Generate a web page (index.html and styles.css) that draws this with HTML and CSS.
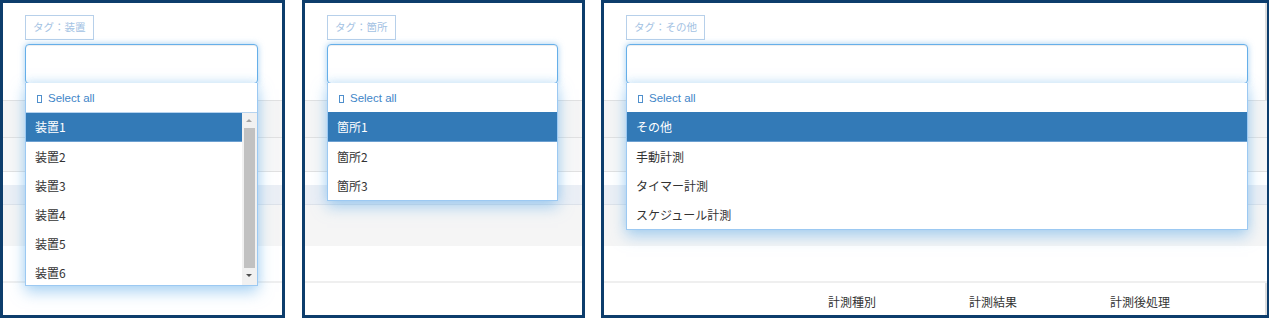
FILE: index.html
```html
<!DOCTYPE html>
<html lang="ja">
<head>
  <meta charset="UTF-8" />
  <title>タグ選択</title>
  <meta name="viewport" content="width=device-width, initial-scale=1.0"/>
  <link rel="stylesheet" href="styles.css">
</head>
<body>

  <div class="board">

    <!-- 装置 -->
    <section class="panel">
      <div class="filter">
        <span class="tag">タグ：装置</span>
        <div class="combo">
          <div class="combo-input"></div>
          <div class="menu">
            <div class="select-all"><span class="box"></span>Select all</div>
            <div class="menu-body">
              <ul class="options">
                <li class="active">装置1</li>
                <li>装置2</li>
                <li>装置3</li>
                <li>装置4</li>
                <li>装置5</li>
                <li>装置6</li>
              </ul>
              <div class="scrollbar">
                <span class="arrow up"></span>
                <span class="thumb"></span>
                <span class="arrow down"></span>
              </div>
            </div>
          </div>
        </div>
      </div>
      <div class="rows">
        <div class="row r1"></div>
        <div class="row r2"></div>
        <div class="row r3"></div>
        <div class="row r4"></div>
        <div class="row r5"></div>
        <div class="row r6"></div>
        <div class="row head"></div>
      </div>
    </section>

    <!-- 箇所 -->
    <section class="panel">
      <div class="filter">
        <span class="tag">タグ：箇所</span>
        <div class="combo">
          <div class="combo-input"></div>
          <div class="menu">
            <div class="select-all"><span class="box"></span>Select all</div>
            <ul class="options">
              <li class="active">箇所1</li>
              <li>箇所2</li>
              <li>箇所3</li>
            </ul>
          </div>
        </div>
      </div>
      <div class="rows">
        <div class="row r1"></div>
        <div class="row r2"></div>
        <div class="row r3"></div>
        <div class="row r4"></div>
        <div class="row r5"></div>
        <div class="row r6"></div>
        <div class="row head"></div>
      </div>
    </section>

    <!-- その他 -->
    <section class="panel panel-wide">
      <div class="filter">
        <span class="tag">タグ：その他</span>
        <div class="combo">
          <div class="combo-input"></div>
          <div class="menu">
            <div class="select-all"><span class="box"></span>Select all</div>
            <ul class="options">
              <li class="active">その他</li>
              <li>手動計測</li>
              <li>タイマー計測</li>
              <li>スケジュール計測</li>
            </ul>
          </div>
        </div>
      </div>
      <div class="rows">
        <div class="row r1"></div>
        <div class="row r2"></div>
        <div class="row r3"></div>
        <div class="row r4"></div>
        <div class="row r5"></div>
        <div class="row r6"></div>
        <div class="row head">
          <span>計測種別</span>
          <span>計測結果</span>
          <span>計測後処理</span>
        </div>
      </div>
    </section>

  </div>

</body>
</html>
```

FILE: styles.css
```css
* {
  box-sizing: border-box;
}

body {
  margin: 0;
  background-color: #ffffff;
  font-family: "Liberation Sans", "Noto Sans CJK JP", sans-serif;
  color: #333;
}

.board {
  display: grid;
  grid-template-columns: 285px 283px 668px;
  column-gap: 17px;
  height: 318px;
}

.board .panel:last-child {
  margin-left: -1px;
}

.panel {
  position: relative;
  height: 318px;
  border: 3px solid #0d3d6c;
  overflow: hidden;
  background-color: #fff;
}

.panel-wide {
  box-shadow: inset -2px 0 0 #dcdcdc;
}

.filter {
  position: relative;
  z-index: 2;
  padding: 12px 24px 0 22px;
}

.panel-wide .filter {
  padding-right: 19px;
}

.tag {
  display: inline-block;
  height: 25px;
  line-height: 23px;
  padding: 0 7px;
  border: 1px solid #b7d0ea;
  color: #a3c2e3;
  font-size: 10.5px;
  margin-bottom: 4px;
  vertical-align: top;
}

.combo {
  position: relative;
}

.combo-input {
  height: 40px;
  border: 1px solid #66afe9;
  border-radius: 4px;
  background-color: #fff;
  box-shadow: inset 0 1px 1px rgba(0, 0, 0, 0.075), 0 0 6px rgba(102, 175, 233, 0.6);
}

.menu {
  position: absolute;
  top: 39px;
  left: 0;
  right: 0;
  background-color: #fff;
  border: 1px solid #9cc9f2;
  border-top: none;
  box-shadow: 0 6px 14px rgba(102, 175, 233, 0.55), 0 -3px 8px rgba(102, 175, 233, 0.18);
}

.select-all {
  height: 30px;
  line-height: 30px;
  padding-left: 11px;
  color: #3f86c8;
  font-size: 11.5px;
  border-bottom: 1px solid #b7d3ee;
}

.select-all .box {
  display: inline-block;
  width: 5px;
  height: 8px;
  border: 1px solid #4f8fcc;
  margin-right: 6px;
  vertical-align: -1px;
}

.options {
  list-style: none;
  margin: 0;
  padding: 0;
}

.options li {
  height: 29px;
  line-height: 29px;
  padding-left: 9px;
  font-size: 12px;
  color: #333;
  font-family: "Noto Sans CJK JP", sans-serif;
}

.options li.active {
  background-color: #337ab7;
  color: #fff;
  border-bottom: 1px solid #6b9fd0;
  margin-top: -1px;
  height: 30px;
}

.menu-body {
  display: flex;
  height: 172px;
  overflow: hidden;
}

.menu-body .options {
  flex: 1;
}

.scrollbar {
  position: relative;
  width: 15px;
  background-color: #f1f1f1;
}

.scrollbar .thumb {
  position: absolute;
  left: 2px;
  right: 2px;
  top: 15px;
  height: 140px;
  background-color: #c1c1c1;
}

.scrollbar .arrow {
  position: absolute;
  left: 4px;
  width: 0;
  height: 0;
  border-left: 3px solid transparent;
  border-right: 3px solid transparent;
}

.scrollbar .up {
  top: 6px;
  border-bottom: 3px solid #a3a3a3;
}

.scrollbar .down {
  bottom: 8px;
  border-top: 3px solid #505050;
}

.rows {
  padding-top: 16px;
}

.row {
  border-top: 1px solid #e1e1e1;
}

.r1 {
  height: 37px;
  background-color: #f5f5f5;
}

.r2 {
  height: 34px;
  background-color: #f7f7f7;
}

.r3 {
  height: 14px;
  background-color: #fff;
}

.r4 {
  height: 19px;
  border-top: none;
  background-color: #ebeff5;
}

.r5 {
  height: 42px;
  border-top-color: #dde2e9;
  background-color: #f5f5f5;
}

.r6 {
  height: 35px;
  border-top: none;
  background-color: #fff;
}

.head {
  display: flex;
  height: 40px;
  border-top: 2px solid #efefef;
  padding-left: 224px;
  padding-top: 10px;
  font-size: 12px;
  font-family: "Noto Sans CJK JP", sans-serif;
  color: #333;
}

.head span {
  width: 141px;
}
```
